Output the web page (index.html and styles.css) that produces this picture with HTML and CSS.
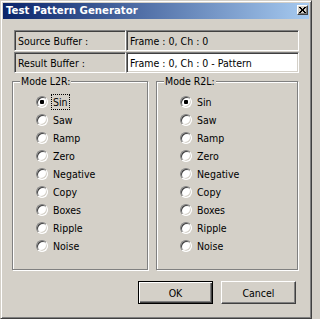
FILE: index.html
```html
<!DOCTYPE html>
<html>
<head>
<meta charset="utf-8">
<title>Test Pattern Generator</title>
<link rel="stylesheet" href="styles.css">
</head>
<body>
<div class="window">
  <div class="titlebar">
    <span class="title">Test Pattern Generator</span>
    <span class="close"><svg width="7" height="6" viewBox="0 0 7 6"><path d="M0 0h2v1h-2zM5 0h2v1h-2zM1 1h2v1h-2zM4 1h2v1h-2zM2 2h3v1h-3zM2 3h3v1h-3zM1 4h2v1h-2zM4 4h2v1h-2zM0 5h2v1h-2zM5 5h2v1h-2z" fill="#000"/></svg></span>
  </div>
  <div class="body">
    <div class="buffers">
      <div class="buf-row">
        <div class="field label">Source Buffer :</div>
        <div class="field value">Frame : 0, Ch : 0</div>
      </div>
      <div class="buf-row">
        <div class="field label">Result Buffer :</div>
        <div class="field value edit">Frame : 0, Ch : 0 - Pattern</div>
      </div>
    </div>
    <div class="groups">
      <div class="group l2r">
        <span class="legend">Mode L2R:</span>
        <ul class="radios">
          <li class="radio"><span class="circle checked"></span><span class="text focus">Sin</span></li>
          <li class="radio"><span class="circle"></span><span class="text">Saw</span></li>
          <li class="radio"><span class="circle"></span><span class="text">Ramp</span></li>
          <li class="radio"><span class="circle"></span><span class="text">Zero</span></li>
          <li class="radio"><span class="circle"></span><span class="text">Negative</span></li>
          <li class="radio"><span class="circle"></span><span class="text">Copy</span></li>
          <li class="radio"><span class="circle"></span><span class="text">Boxes</span></li>
          <li class="radio"><span class="circle"></span><span class="text">Ripple</span></li>
          <li class="radio"><span class="circle"></span><span class="text">Noise</span></li>
        </ul>
      </div>
      <div class="group r2l">
        <span class="legend">Mode R2L:</span>
        <ul class="radios">
          <li class="radio"><span class="circle checked"></span><span class="text">Sin</span></li>
          <li class="radio"><span class="circle"></span><span class="text">Saw</span></li>
          <li class="radio"><span class="circle"></span><span class="text">Ramp</span></li>
          <li class="radio"><span class="circle"></span><span class="text">Zero</span></li>
          <li class="radio"><span class="circle"></span><span class="text">Negative</span></li>
          <li class="radio"><span class="circle"></span><span class="text">Copy</span></li>
          <li class="radio"><span class="circle"></span><span class="text">Boxes</span></li>
          <li class="radio"><span class="circle"></span><span class="text">Ripple</span></li>
          <li class="radio"><span class="circle"></span><span class="text">Noise</span></li>
        </ul>
      </div>
    </div>
    <div class="buttons">
      <span class="btn default">OK</span>
      <span class="btn">Cancel</span>
    </div>
  </div>
</div>
</body>
</html>
```
FILE: styles.css
```css
html, body {
  margin: 0;
  padding: 0;
  background: #d4d0c8;
}

.window {
  width: 312px;
  height: 319px;
  box-sizing: border-box;
  border: 1px solid;
  border-color: #d4d0c8 #404040 #404040 #d4d0c8;
  box-shadow: inset 1px 1px 0 #fff, inset -1px -1px 0 #808080;
  padding: 2px;
  background: #d4d0c8;
  font-family: "DejaVu Sans Condensed", "DejaVu Sans", sans-serif;
  font-stretch: condensed;
  font-size: 10.5px;
  color: #000;
}

.titlebar {
  height: 16px;
  display: flex;
  align-items: flex-start;
  background: linear-gradient(to right, #0a246a, #a6caf0);
  color: #fff;
  padding-left: 3px;
}

.title {
  flex: 1;
  font-family: "DejaVu Sans", sans-serif;
  font-stretch: normal;
  font-size: 10.2px;
  font-weight: bold;
  line-height: 16px;
}

.close {
  width: 11px;
  height: 10px;
  margin: 2px 1px 0 0;
  box-sizing: border-box;
  border: 1px solid;
  border-color: #fff #404040 #404040 #fff;
  box-shadow: inset -1px -1px 0 #808080;
  background: #d4d0c8;
  display: flex;
  align-items: center;
  justify-content: center;
}

.close svg {
  display: block;
  margin: 0 1px 1px 0;
}

.body {
  padding: 11px 10px 0 9px;
}

.buffers {
  margin-left: 2px;
  display: flex;
  flex-direction: column;
  gap: 1px;
}

.buf-row {
  display: flex;
  height: 21px;
}

.field {
  box-sizing: border-box;
  height: 21px;
  border: 1px solid;
  border-color: #808080 #fff #fff #808080;
  box-shadow: inset 1px 1px 0 #404040, inset -1px -1px 0 #d4d0c8;
  padding: 0 3px;
  display: flex;
  align-items: center;
  white-space: nowrap;
  overflow: hidden;
}

.label {
  width: 112px;
}

.value {
  flex: 1;
}

.edit {
  background: #fff;
}

.groups {
  display: flex;
  gap: 8px;
  margin-top: 8px;
}

.group {
  box-sizing: border-box;
  height: 189px;
  border: 1px solid #808080;
  box-shadow: 1px 1px 0 #fff, inset 1px 1px 0 #fff;
  display: flex;
  flex-direction: column;
  align-items: flex-start;
}

.l2r {
  width: 136px;
}

.r2l {
  width: 142px;
}

.legend {
  display: block;
  height: 14px;
  line-height: 14px;
  margin: -8px 0 5px 7px;
  padding: 0 1px;
  background: #d4d0c8;
}

.radios {
  list-style: none;
  margin: 0;
  padding: 0 0 0 23px;
}

.radio {
  height: 18px;
  display: flex;
  align-items: center;
}

.circle {
  width: 12px;
  height: 12px;
  box-sizing: border-box;
  border-radius: 50%;
  border: 1px solid;
  border-color: #808080 #fff #fff #808080;
  box-shadow: inset 1px 1px 0 #404040, inset -1px -1px 0 #d4d0c8;
  background: #fff;
  display: flex;
  align-items: center;
  justify-content: center;
}

.checked::after {
  content: "";
  width: 4px;
  height: 4px;
  border-radius: 1px;
  background: #000;
}

.text {
  margin-left: 3px;
  padding: 0 1px;
  line-height: 14px;
  border: 1px dotted transparent;
}

.focus {
  border-color: #000;
}

.buttons {
  display: flex;
  justify-content: flex-end;
  gap: 8px;
  margin: 11px 3px 0 0;
}

.btn {
  box-sizing: border-box;
  width: 75px;
  height: 23px;
  border: 1px solid;
  border-color: #fff #404040 #404040 #fff;
  box-shadow: inset -1px -1px 0 #808080;
  display: flex;
  align-items: center;
  justify-content: center;
}

.default {
  border-color: #000;
  box-shadow: inset 1px 1px 0 #fff, inset -1px -1px 0 #404040, inset -2px -2px 0 #808080;
}
```
